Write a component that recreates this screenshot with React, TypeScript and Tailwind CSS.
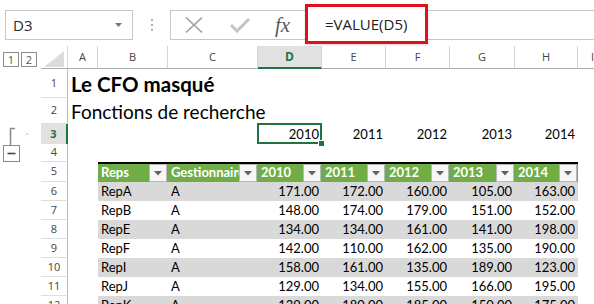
import React from 'react';

const colW = ['w-[30px]', 'w-[70px]', 'w-[90px]', 'w-[64px]', 'w-[64px]', 'w-[64px]', 'w-[65px]', 'w-[63px]', 'w-[30px]'];
const letters = ['A', 'B', 'C', 'D', 'E', 'F', 'G', 'H', 'I'];

const data: [string, string, string[]][] = [
  ['RepA', 'A', ['171.00', '172.00', '160.00', '105.00', '163.00']],
  ['RepB', 'A', ['148.00', '174.00', '179.00', '151.00', '152.00']],
  ['RepE', 'A', ['134.00', '134.00', '161.00', '141.00', '198.00']],
  ['RepF', 'A', ['142.00', '110.00', '162.00', '135.00', '190.00']],
  ['RepI', 'A', ['158.00', '161.00', '135.00', '189.00', '123.00']],
  ['RepJ', 'A', ['129.00', '134.00', '155.00', '166.00', '195.00']],
  ['RepK', 'A', ['139.00', '180.00', '185.00', '150.00', '175.00']],
];

const numW = ['w-[64px]', 'w-[64px]', 'w-[64px]', 'w-[65px]', 'w-[63px]'];

function RowHeader({ n, h, active }: { n: number; h: string; active?: boolean }) {
  return (
    <div className={`${h} flex shrink-0`}>
      <div className="w-[41px] shrink-0" />
      <div
        className={
          active
            ? 'w-[27px] shrink-0 flex items-center justify-center bg-[#e1e1e1] border-r-2 border-[#217346] text-[#217346] font-bold text-[11px] font-["Open_Sans",sans-serif]'
            : 'w-[27px] shrink-0 flex items-center justify-center border-r border-b border-r-[#bdbdbd] border-b-[#dedede] text-[#444] text-[11px] font-["Open_Sans",sans-serif]'
        }
      >
        {n}
      </div>
    </div>
  );
}

function Drop() {
  return (
    <div className="w-[18px] h-full shrink-0 mr-[1px] bg-[#f7f7f7] border border-[#b8b8b8] flex items-center justify-center">
      <svg width="8" height="5" viewBox="0 0 8 5">
        <path d="M0 0 L8 0 L4 4.5 Z" fill="#606060" />
      </svg>
    </div>
  );
}

export default function App() {
  const heights = ['h-[29px]', 'h-[26px]', 'h-[20px]', 'h-[18px]', 'h-[20px]'];
  return (
    <div className="w-[594px] h-[304px] overflow-hidden bg-white relative font-[Lato,sans-serif] text-black">
      {/* formula bar */}
      <div className="h-[46px] flex pt-[10px]">
        <div className="ml-[5px] w-[128px] h-[30px] border border-[#c6c6c6] flex items-center justify-between pl-[7px] pr-[9px] font-['Open_Sans',sans-serif] text-[15px] text-[#2a2a2a]">
          <span className="leading-none pt-[1px]">D3</span>
          <svg width="8" height="5" viewBox="0 0 8 5">
            <path d="M0 0 L7 0 L3.5 4 Z" fill="#777" />
          </svg>
        </div>
        <div className="w-[37px] h-[30px] flex flex-col items-center justify-center gap-[3px]">
          <div className="w-[2px] h-[2px] bg-[#b0b0b0]" />
          <div className="w-[2px] h-[2px] bg-[#b0b0b0]" />
          <div className="w-[2px] h-[2px] bg-[#b0b0b0]" />
        </div>
        <div className="flex-1 h-[30px] border-y border-l border-[#c6c6c6] relative flex items-center">
          <svg width="20" height="18" viewBox="0 0 20 18" className="ml-[13px]">
            <path d="M2 1.5 L18 16.5 M18 1.5 L2 16.5" stroke="#9e9e9e" strokeWidth="1.6" />
          </svg>
          <svg width="22" height="16" viewBox="0 0 22 16" className="ml-[25px]">
            <path d="M2 8 L8 14 L20 2" stroke="#c4c4c4" strokeWidth="3" fill="none" />
          </svg>
          <span className="ml-[24px] font-['Liberation_Serif',serif] italic text-[21px] text-[#5a5a5a] leading-none">fx</span>
          <div className="absolute left-[134px] top-[-7px] w-[123px] h-[40px] border-[3px] border-[#e2101c] bg-white flex items-center pl-[17px] shadow-[0_1px_2px_rgba(0,0,0,0.15)]">
            <span className="font-['Open_Sans',sans-serif] text-[15px] text-[#222] leading-none pt-[1px]">=VALUE(D5)</span>
          </div>
        </div>
      </div>

      {/* column headers */}
      <div className="flex h-[23px]">
        <div className="w-[41px] shrink-0 flex items-start pt-[6px] pl-[3px] gap-[2px]">
          <div className="w-[16px] h-[15px] border border-[#8c8c8c] flex items-center justify-center text-[11px] text-[#555] font-['Open_Sans',sans-serif] leading-none">1</div>
          <div className="w-[16px] h-[15px] border border-[#8c8c8c] flex items-center justify-center text-[11px] text-[#555] font-['Open_Sans',sans-serif] leading-none">2</div>
        </div>
        <div className="w-[27px] shrink-0 border-r border-b border-r-[#d4d4d4] border-b-[#ababab] flex items-end justify-end pr-[3px] pb-[1px]">
          <svg width="20" height="16" viewBox="0 0 20 16">
            <path d="M0 16 L20 16 L20 0 Z" fill="#dcdcdc" />
          </svg>
        </div>
        {letters.map((l, i) =>
          l === 'D' ? (
            <div key={l} className={`${colW[i]} shrink-0 bg-[#e1e1e1] border-b-2 border-[#217346] border-r border-r-[#d4d4d4] flex items-center justify-center text-[12px] font-bold text-[#217346] font-['Open_Sans',sans-serif] pt-[1px]`}>
              {l}
            </div>
          ) : (
            <div key={l} className={`${colW[i]} shrink-0 border-b border-b-[#ababab] border-r border-r-[#d4d4d4] flex items-center justify-center text-[11px] text-[#444] font-['Open_Sans',sans-serif]`}>
              {l}
            </div>
          )
        )}
      </div>

      {/* body */}
      <div className="flex">
        <div className="flex flex-col shrink-0 relative">
          {heights.map((h, i) => (
            <RowHeader key={i} n={i + 1} h={h} active={i === 2} />
          ))}
          {data.map((_, i) => (
            <RowHeader key={i + 10} n={i + 6} h="h-[19px]" />
          ))}
          {/* outline bracket */}
          <svg className="absolute left-0 top-0" width="41" height="120" viewBox="0 0 41 120">
            <path d="M10.5 59 L10.5 77 M10 59.5 L15 59.5" stroke="#8a8a8a" strokeWidth="1.5" fill="none" />
            <rect x="26.5" y="64.5" width="1.2" height="1.2" fill="#999" />
            <rect x="3.5" y="76.5" width="16" height="16" fill="white" stroke="#8a8a8a" strokeWidth="1" />
            <path d="M7.5 84.5 L15.5 84.5" stroke="#444" strokeWidth="1.6" />
          </svg>
        </div>

        <div className="flex flex-col">
          {/* row 1 */}
          <div className="h-[29px] flex items-end pl-[3px] pb-[4px]">
            <span className="text-[20.5px] font-bold leading-none whitespace-nowrap">Le CFO masqué</span>
          </div>
          {/* row 2 */}
          <div className="h-[26px] flex items-end pl-[3px] pb-[3px]">
            <span className="text-[19px] leading-none whitespace-nowrap">Fonctions de recherche</span>
          </div>
          {/* row 3 */}
          <div className="h-[20px] flex">
            <div className="w-[190px] shrink-0" />
            {['2010', '2011', '2012', '2013', '2014'].map((y, i) => (
              <div key={y} className={`${numW[i]} shrink-0 relative flex items-end justify-end pr-[3px] pb-[3px] text-[13px] leading-none`}>
                {y}
                {i === 0 && (
                  <>
                    <div className="absolute left-[-1px] top-[-1px] right-0 bottom-0 border-2 border-[#217346]" />
                    <div className="absolute right-[-3px] bottom-[-3px] w-[5px] h-[5px] bg-[#217346] border border-white box-content" />
                  </>
                )}
              </div>
            ))}
          </div>
          {/* row 4 */}
          <div className="h-[18px]" />
          {/* row 5 table header */}
          <div className="h-[20px] flex">
            <div className="w-[30px] shrink-0" />
            <div className="flex border-t-2 border-black bg-[#70ad47] text-white font-bold text-[13px] leading-none">
              {['Reps', 'Gestionnaire', '2010', '2011', '2012', '2013', '2014'].map((t, i) => (
                <div key={t} className={`${colW[i + 1]} shrink-0 flex items-stretch overflow-hidden`}>
                  <div className="flex-1 min-w-0 overflow-hidden whitespace-nowrap flex items-end pl-[3px] pb-[3px]">{t}</div>
                  <Drop />
                </div>
              ))}
            </div>
          </div>
          {/* data rows */}
          {data.map(([rep, g, nums], r) => (
            <div key={rep} className="h-[19px] flex">
              <div className="w-[30px] shrink-0" />
              <div className={`flex text-[13px] leading-none ${r % 2 === 0 ? 'bg-[#d9d9d9]' : 'bg-white'}`}>
                <div className="w-[70px] shrink-0 flex items-end pl-[3px] pb-[3px]">{rep}</div>
                <div className="w-[90px] shrink-0 flex items-end pl-[3px] pb-[3px]">{g}</div>
                {nums.map((n, i) => (
                  <div key={i} className={`${numW[i]} shrink-0 flex items-end justify-end pr-[3px] pb-[3px]`}>{n}</div>
                ))}
              </div>
            </div>
          ))}
        </div>
      </div>
    </div>
  );
}
